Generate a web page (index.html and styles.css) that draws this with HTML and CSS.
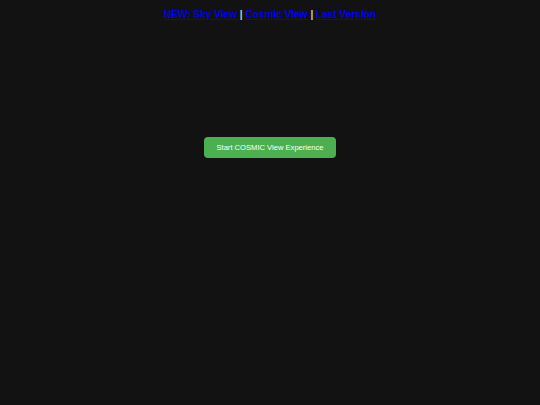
FILE: index.html
```html
<!DOCTYPE html>
<html>
<head>
<meta charset="utf-8">
<link rel="stylesheet" href="styles.css">
</head>
<body>
<div class="nav">
<a href="#">NEW: Sky View</a> | <a href="#">Cosmic View</a> | <a href="#">Last Version</a>
</div>
<div class="stage">
<button class="start">Start COSMIC View Experience</button>
</div>
</body>
</html>
```
FILE: styles.css
```css
html, body {
  margin: 0;
  padding: 0;
  background: #121212;
  height: 100%;
}
body {
  font-family: "Liberation Sans", Arial, sans-serif;
}
.nav {
  text-align: center;
  font-size: 10.1px;
  font-weight: bold;
  color: #cccccc;
  padding-top: 8px;
  line-height: 13px;
}
.nav a {
  color: #0000ee;
}
.stage {
  display: flex;
  justify-content: center;
  padding-top: 116px;
}
.start {
  background: #4caf50;
  color: #ffffff;
  border: none;
  border-radius: 4px;
  font-family: "Liberation Sans", Arial, sans-serif;
  font-size: 7.6px;
  width: 132px;
  height: 21px;
  padding: 0;
}
```
